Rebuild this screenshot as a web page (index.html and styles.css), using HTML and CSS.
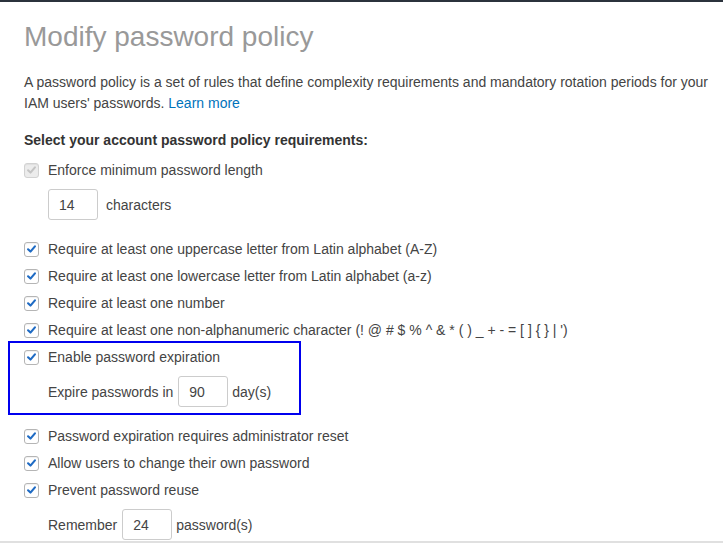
FILE: index.html
```html
<!DOCTYPE html>
<html>
<head>
<meta charset="utf-8">
<link rel="stylesheet" href="styles.css">
</head>
<body>
<div class="page">
  <h1 class="title">Modify password policy</h1>
  <p class="intro">A password policy is a set of rules that define complexity requirements and mandatory rotation periods for your IAM users' passwords. <a class="link" href="#">Learn more</a></p>
  <div class="heading">Select your account password policy requirements:</div>

  <div class="row"><span class="cb disabled"><svg viewBox="0 0 14 14" width="14" height="14"><path d="M3.3 7.3 L5.9 9.8 L10.7 4.2" fill="none" stroke="#c4c4c4" stroke-width="2.2" stroke-linecap="round" stroke-linejoin="round"/></svg></span><span class="label">Enforce minimum password length</span></div>
  <div class="field first"><span class="box">14</span><span class="unit">characters</span></div>

  <div class="row"><span class="cb"><svg viewBox="0 0 14 14" width="14" height="14"><path d="M3.3 7.3 L5.9 9.8 L10.7 4.2" fill="none" stroke="#1f6bc4" stroke-width="2.3" stroke-linecap="round" stroke-linejoin="round"/></svg></span><span class="label">Require at least one uppercase letter from Latin alphabet (A-Z)</span></div>
  <div class="row"><span class="cb"><svg viewBox="0 0 14 14" width="14" height="14"><path d="M3.3 7.3 L5.9 9.8 L10.7 4.2" fill="none" stroke="#1f6bc4" stroke-width="2.3" stroke-linecap="round" stroke-linejoin="round"/></svg></span><span class="label">Require at least one lowercase letter from Latin alphabet (a-z)</span></div>
  <div class="row"><span class="cb"><svg viewBox="0 0 14 14" width="14" height="14"><path d="M3.3 7.3 L5.9 9.8 L10.7 4.2" fill="none" stroke="#1f6bc4" stroke-width="2.3" stroke-linecap="round" stroke-linejoin="round"/></svg></span><span class="label">Require at least one number</span></div>
  <div class="row"><span class="cb"><svg viewBox="0 0 14 14" width="14" height="14"><path d="M3.3 7.3 L5.9 9.8 L10.7 4.2" fill="none" stroke="#1f6bc4" stroke-width="2.3" stroke-linecap="round" stroke-linejoin="round"/></svg></span><span class="label">Require at least one non-alphanumeric character (! @ # $ % ^ &amp; * ( ) _ + - = [ ] { } | ')</span></div>

  <div class="highlight">
    <div class="row"><span class="cb"><svg viewBox="0 0 14 14" width="14" height="14"><path d="M3.3 7.3 L5.9 9.8 L10.7 4.2" fill="none" stroke="#1f6bc4" stroke-width="2.3" stroke-linecap="round" stroke-linejoin="round"/></svg></span><span class="label">Enable password expiration</span></div>
    <div class="field"><span class="pre">Expire passwords in</span><span class="box">90</span><span class="unit">day(s)</span></div>
  </div>

  <div class="row"><span class="cb"><svg viewBox="0 0 14 14" width="14" height="14"><path d="M3.3 7.3 L5.9 9.8 L10.7 4.2" fill="none" stroke="#1f6bc4" stroke-width="2.3" stroke-linecap="round" stroke-linejoin="round"/></svg></span><span class="label">Password expiration requires administrator reset</span></div>
  <div class="row"><span class="cb"><svg viewBox="0 0 14 14" width="14" height="14"><path d="M3.3 7.3 L5.9 9.8 L10.7 4.2" fill="none" stroke="#1f6bc4" stroke-width="2.3" stroke-linecap="round" stroke-linejoin="round"/></svg></span><span class="label">Allow users to change their own password</span></div>
  <div class="row"><span class="cb"><svg viewBox="0 0 14 14" width="14" height="14"><path d="M3.3 7.3 L5.9 9.8 L10.7 4.2" fill="none" stroke="#1f6bc4" stroke-width="2.3" stroke-linecap="round" stroke-linejoin="round"/></svg></span><span class="label">Prevent password reuse</span></div>
  <div class="field last"><span class="pre">Remember</span><span class="box">24</span><span class="unit">password(s)</span></div>
</div>
<div class="footer"></div>
</body>
</html>
```
FILE: styles.css
```css
html, body {
  margin: 0;
  padding: 0;
  background: #fff;
}
body {
  border-top: 2px solid #2b323c;
  font-family: "Liberation Sans", Arial, sans-serif;
  font-size: 14px;
  line-height: 20px;
  color: #444;
  overflow: hidden;
}
.page {
  padding: 0 10px 0 24px;
}
.title {
  margin: 18px 0 0 0;
  font-size: 28px;
  line-height: 34px;
  font-weight: normal;
  color: #999;
}
.intro {
  margin: 18px 0 0 0;
  line-height: 21px;
}
.link {
  color: #0073bb;
  text-decoration: none;
}
.heading {
  margin-top: 16px;
  font-weight: bold;
  color: #333;
}
.row {
  display: flex;
  align-items: center;
  height: 20px;
  margin-top: 7px;
}
.heading + .row {
  margin-top: 10px;
}
.cb {
  box-sizing: border-box;
  width: 15px;
  height: 15px;
  border: 1px solid #b5b5b5;
  border-radius: 3px;
  background: #fff;
  box-shadow: inset 0 1px 1px rgba(0,0,0,0.06);
  margin-right: 9px;
  display: flex;
  align-items: center;
  justify-content: center;
}
.cb svg {
  display: block;
}
.cb.disabled {
  background: #ececec;
  border-color: #d2d2d2;
}
.field {
  display: flex;
  align-items: center;
  margin: 9px 0 0 24px;
}
.field .box {
  box-sizing: border-box;
  width: 50px;
  height: 31px;
  border: 1px solid #ccc;
  border-radius: 3px;
  padding: 0 10px;
  display: flex;
  align-items: center;
  color: #444;
}
.field .pre {
  margin-right: 5px;
}
.field .unit {
  margin-left: 4px;
}
.field.first .unit {
  margin-left: 8px;
}
.field + .row,
.highlight + .row {
  margin-top: 19px;
}
.highlight {
  position: relative;
}
.highlight::before {
  content: "";
  position: absolute;
  top: -6px;
  bottom: -8px;
  left: -16px;
  width: 293px;
  box-sizing: border-box;
  border: 2px solid #0000ee;
  pointer-events: none;
}
.footer {
  margin-top: 1px;
  border-top: 2px solid #e0e0e0;
  height: 20px;
}
```
